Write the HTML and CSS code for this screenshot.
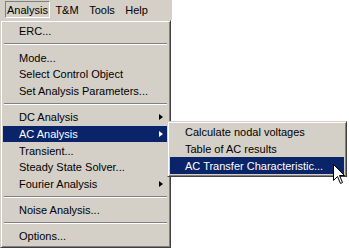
FILE: index.html
```html
<!DOCTYPE html>
<html lang="en">

<head>
    <meta charset="UTF-8">
    <title>Analysis menu</title>
    <link rel="stylesheet" href="styles.css">
</head>

<body>
    <div class="menubar">
        <div class="bar-item open">Analysis</div>
        <div class="bar-item tm">T&amp;M</div>
        <div class="bar-item tools">Tools</div>
        <div class="bar-item help">Help</div>
    </div>

    <div class="dropdown">
        <div class="item">ERC...</div>
        <div class="sep"><span></span></div>
        <div class="item">Mode...</div>
        <div class="item">Select Control Object</div>
        <div class="item">Set Analysis Parameters...</div>
        <div class="sep"><span></span></div>
        <div class="item">DC Analysis<i class="arrow"></i></div>
        <div class="item active">AC Analysis<i class="arrow"></i></div>
        <div class="item">Transient...</div>
        <div class="item">Steady State Solver...</div>
        <div class="item">Fourier Analysis<i class="arrow"></i></div>
        <div class="sep"><span></span></div>
        <div class="item">Noise Analysis...</div>
        <div class="sep"><span></span></div>
        <div class="item">Options...</div>
    </div>

    <div class="submenu">
        <div class="item">Calculate nodal voltages</div>
        <div class="item">Table of AC results</div>
        <div class="item active">AC Transfer Characteristic...</div>
    </div>

    <!-- mouse pointer -->
    <svg class="cursor" width="13" height="21" viewBox="0 0 13 21">
        <path d="M0.5 0.5 V16.5 L4.5 12.5 L7.5 19.5 L9.5 18.5 L6.5 11.5 H11.5 Z" fill="#fff" stroke="#000" stroke-width="1" stroke-linejoin="miter" />
    </svg>
</body>

</html>
```

FILE: styles.css
```css
* {
    box-sizing: border-box;
    margin: 0;
}

body {
    background-color: #fff;
    font-family: "Liberation Sans", Arial, sans-serif;
    font-size: 11px;
    color: #000;
}

.menubar {
    display: flex;
    width: 172px;
    height: 20px;
    padding-top: 1px;
    padding-left: 5px;
    background-color: #d4d0c8;
}

.bar-item {
    height: 17px;
    padding-top: 2px;
    line-height: 13px;
    text-align: center;
    border: 1px solid transparent;
}

.bar-item.open {
    width: 45px;
    border-color: #808080 #fff #fff #808080;
}

.tm {
    width: 34px;
}

.tools {
    width: 36px;
}

.help {
    width: 33px;
}

/* the open menus */
.dropdown,
.submenu {
    position: absolute;
    background-color: #d4d0c8;
    border: 1px solid;
    border-color: #d4d0c8 #404040 #404040 #d4d0c8;
    box-shadow: inset 1px 1px 0 #fff, inset -1px -1px 0 #808080;
    padding: 2px;
}

.dropdown {
    left: 0;
    top: 20px;
    width: 171px;
}

.submenu {
    left: 167px;
    top: 121px;
    width: 180px;
}

.item {
    display: flex;
    align-items: center;
    height: 16.67px;
    padding-left: 16px;
    white-space: nowrap;
}

.submenu .item {
    padding-left: 15px;
}

.item.active {
    background-color: #0a246a;
    color: #fff;
}

.arrow {
    margin-left: auto;
    margin-right: 5px;
    width: 0;
    height: 0;
    border-left: 4px solid #000;
    border-top: 3.5px solid transparent;
    border-bottom: 3.5px solid transparent;
}

.item.active .arrow {
    border-left-color: #fff;
}

.sep {
    display: flex;
    align-items: center;
    height: 9.65px;
    padding: 0 1px;
}

.sep span {
    flex: 1;
    border-top: 1px solid #808080;
    border-bottom: 1px solid #fff;
}

.cursor {
    position: absolute;
    left: 333px;
    top: 164px;
}
```
